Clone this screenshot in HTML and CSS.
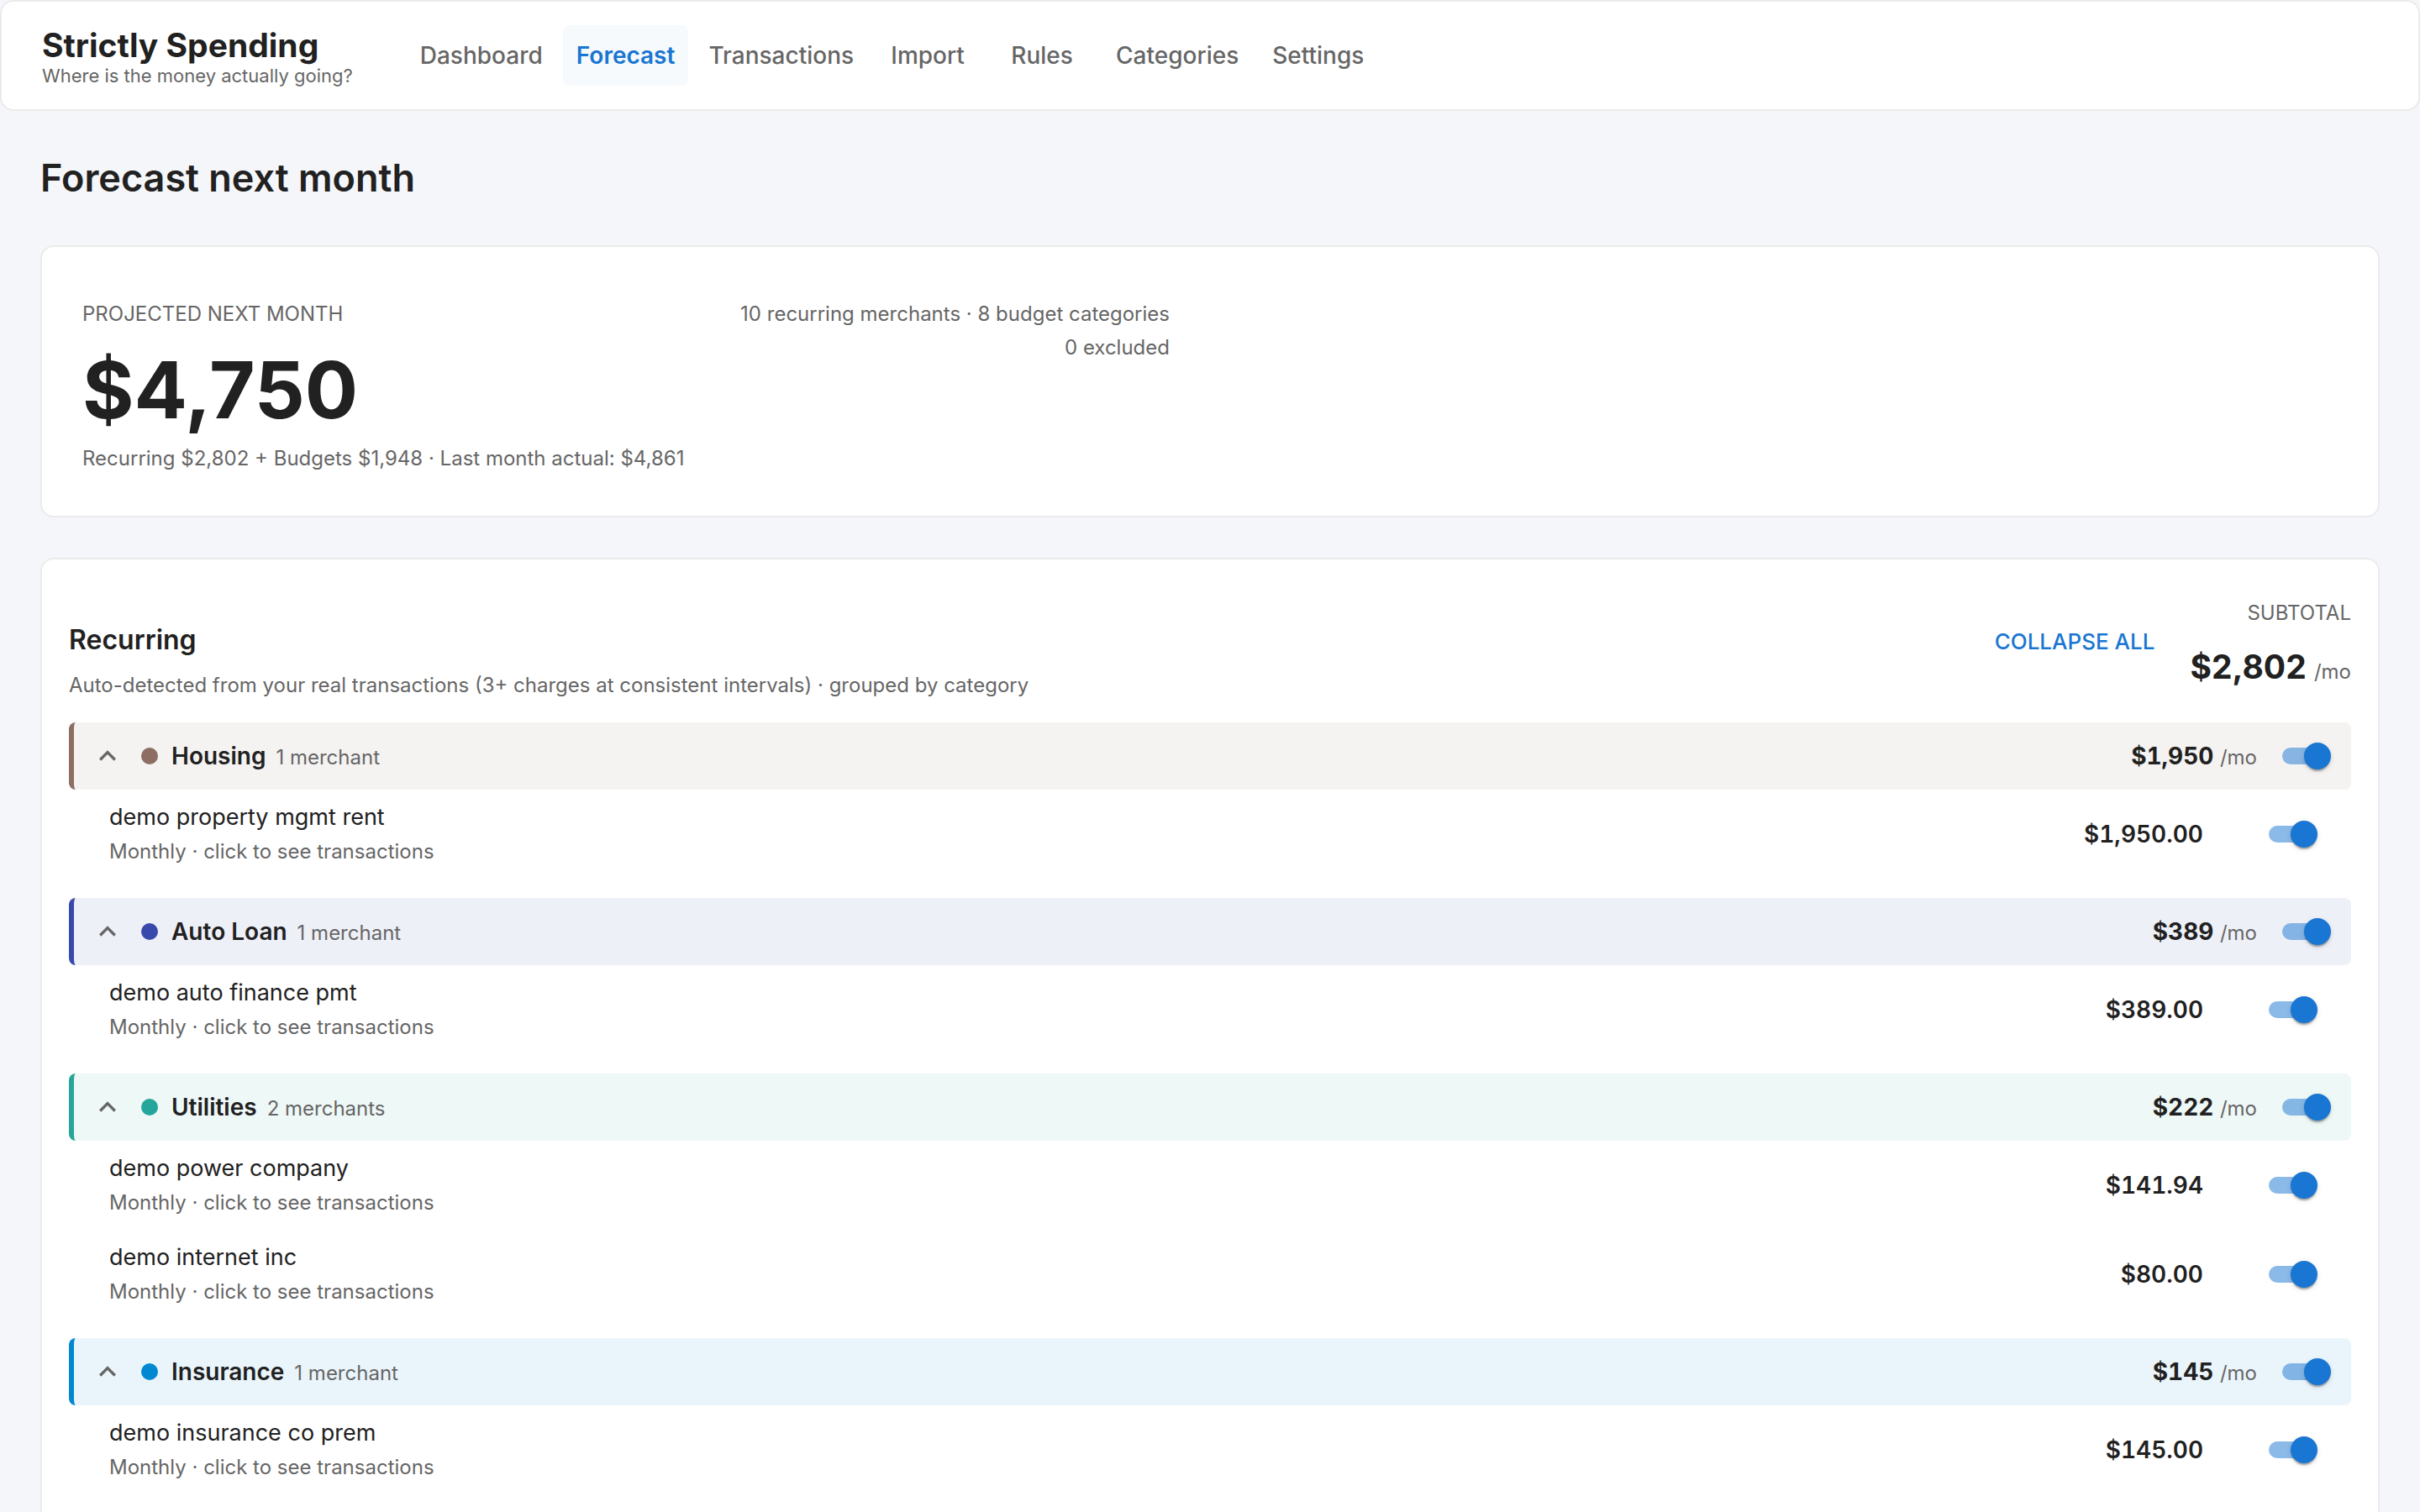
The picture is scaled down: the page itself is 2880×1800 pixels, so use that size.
FILE: index.html
```html
<!DOCTYPE html>
<html lang="en">

<head>
    <meta charset="UTF-8">
    <meta name="viewport" content="width=device-width, initial-scale=1.0">
    <title>Strictly Spending - Forecast</title>
    <link rel="stylesheet" href="styles.css">
</head>

<body>
    <header class="topbar">
        <div class="brand">
            <div class="brand-name">Strictly Spending</div>
            <div class="brand-tagline">Where is the money actually going?</div>
        </div>
        <nav class="nav">
            <a class="nav-link" href="#dashboard">Dashboard</a>
            <a class="nav-link active" href="#forecast">Forecast</a>
            <a class="nav-link" href="#transactions">Transactions</a>
            <a class="nav-link" href="#import">Import</a>
            <a class="nav-link" href="#rules">Rules</a>
            <a class="nav-link" href="#categories">Categories</a>
            <a class="nav-link" href="#settings">Settings</a>
        </nav>
    </header>

    <main class="page">
        <h1>Forecast next month</h1>

        <section class="card summary">
            <div class="summary-main">
                <div>
                    <div class="summary-label">PROJECTED NEXT MONTH</div>
                    <div class="summary-total">$4,750</div>
                    <div class="small">Recurring $2,802 + Budgets $1,948 · Last month actual: $4,861</div>
                </div>
                <div class="summary-counts small">
                    <div>10 recurring merchants · 8 budget categories</div>
                    <div>0 excluded</div>
                </div>
            </div>
        </section>

        <section class="card recurring">
            <div class="card-head">
                <div class="card-title">
                    <h2>Recurring</h2>
                    <p class="small">Auto-detected from your real transactions (3+ charges at consistent intervals) · grouped by category</p>
                </div>
                <button type="button" class="collapse-btn">COLLAPSE ALL</button>
                <div class="subtotal">
                    <div class="small">SUBTOTAL</div>
                    <div class="subtotal-value">$2,802 <span class="small">/mo</span></div>
                </div>
            </div>

            <div class="group housing">
                <div class="group-head">
                    <button type="button" class="toggle-group" aria-label="Collapse Housing">
                        <svg viewBox="0 0 24 24" aria-hidden="true"><path d="m12 8-6 6 1.41 1.41L12 10.83l4.59 4.58L18 14z"/></svg>
                    </button>
                    <span class="dot"></span>
                    <div class="group-title"><h3>Housing</h3> <span class="small">1 merchant</span></div>
                    <div class="group-total">$1,950 <span class="small">/mo</span></div>
                    <input type="checkbox" class="switch" aria-label="Include Housing" checked>
                </div>
                <ul class="merchants">
                    <li class="merchant">
                        <div class="merchant-info">
                            <div class="merchant-name">demo property mgmt rent</div>
                            <div class="small">Monthly · click to see transactions</div>
                        </div>
                        <div class="amount">$1,950.00</div>
                        <input type="checkbox" class="switch" aria-label="Include demo property mgmt rent" checked>
                    </li>
                </ul>
            </div>

            <div class="group auto-loan">
                <div class="group-head">
                    <button type="button" class="toggle-group" aria-label="Collapse Auto Loan">
                        <svg viewBox="0 0 24 24" aria-hidden="true"><path d="m12 8-6 6 1.41 1.41L12 10.83l4.59 4.58L18 14z"/></svg>
                    </button>
                    <span class="dot"></span>
                    <div class="group-title"><h3>Auto Loan</h3> <span class="small">1 merchant</span></div>
                    <div class="group-total">$389 <span class="small">/mo</span></div>
                    <input type="checkbox" class="switch" aria-label="Include Auto Loan" checked>
                </div>
                <ul class="merchants">
                    <li class="merchant">
                        <div class="merchant-info">
                            <div class="merchant-name">demo auto finance pmt</div>
                            <div class="small">Monthly · click to see transactions</div>
                        </div>
                        <div class="amount">$389.00</div>
                        <input type="checkbox" class="switch" aria-label="Include demo auto finance pmt" checked>
                    </li>
                </ul>
            </div>

            <div class="group utilities">
                <div class="group-head">
                    <button type="button" class="toggle-group" aria-label="Collapse Utilities">
                        <svg viewBox="0 0 24 24" aria-hidden="true"><path d="m12 8-6 6 1.41 1.41L12 10.83l4.59 4.58L18 14z"/></svg>
                    </button>
                    <span class="dot"></span>
                    <div class="group-title"><h3>Utilities</h3> <span class="small">2 merchants</span></div>
                    <div class="group-total">$222 <span class="small">/mo</span></div>
                    <input type="checkbox" class="switch" aria-label="Include Utilities" checked>
                </div>
                <ul class="merchants">
                    <li class="merchant">
                        <div class="merchant-info">
                            <div class="merchant-name">demo power company</div>
                            <div class="small">Monthly · click to see transactions</div>
                        </div>
                        <div class="amount">$141.94</div>
                        <input type="checkbox" class="switch" aria-label="Include demo power company" checked>
                    </li>
                    <li class="merchant">
                        <div class="merchant-info">
                            <div class="merchant-name">demo internet inc</div>
                            <div class="small">Monthly · click to see transactions</div>
                        </div>
                        <div class="amount">$80.00</div>
                        <input type="checkbox" class="switch" aria-label="Include demo internet inc" checked>
                    </li>
                </ul>
            </div>

            <div class="group insurance">
                <div class="group-head">
                    <button type="button" class="toggle-group" aria-label="Collapse Insurance">
                        <svg viewBox="0 0 24 24" aria-hidden="true"><path d="m12 8-6 6 1.41 1.41L12 10.83l4.59 4.58L18 14z"/></svg>
                    </button>
                    <span class="dot"></span>
                    <div class="group-title"><h3>Insurance</h3> <span class="small">1 merchant</span></div>
                    <div class="group-total">$145 <span class="small">/mo</span></div>
                    <input type="checkbox" class="switch" aria-label="Include Insurance" checked>
                </div>
                <ul class="merchants">
                    <li class="merchant">
                        <div class="merchant-info">
                            <div class="merchant-name">demo insurance co prem</div>
                            <div class="small">Monthly · click to see transactions</div>
                        </div>
                        <div class="amount">$145.00</div>
                        <input type="checkbox" class="switch" aria-label="Include demo insurance co prem" checked>
                    </li>
                </ul>
            </div>
        </section>
    </main>
</body>

</html>
```
FILE: styles.css
```css
* {
    box-sizing: border-box;
}

body {
    margin: 0;
    font-family: Inter, Roboto, sans-serif;
    font-size: 28px;
    line-height: 42px;
    color: #212121;
    background-color: #f5f6fa;
}

h1,
h2,
h3,
p,
ul {
    margin: 0;
    padding: 0;
}

button {
    font-family: inherit;
    border: none;
    background: none;
    cursor: pointer;
}

.small {
    font-size: 24px;
    font-weight: 400;
    line-height: 40px;
    color: #666;
}

/* top bar */
.topbar {
    display: flex;
    align-items: center;
    gap: 64px;
    padding: 28px 48px;
    background-color: #fff;
    border: 2px solid #ebebeb;
    border-radius: 16px;
}

.brand-name {
    font-size: 39px;
    font-weight: 700;
    line-height: 48px;
}

.brand-tagline {
    font-size: 22px;
    line-height: 24px;
    color: #666;
}

.nav {
    display: flex;
    gap: 8px;
}

.nav-link {
    min-width: 128px;
    padding: 12px 16px;
    font-weight: 500;
    line-height: 48px;
    text-align: center;
    text-decoration: none;
    color: #666;
    border-radius: 8px;
}

.nav-link.active {
    font-weight: 600;
    color: #1976d2;
    background-color: #f6fafd;
}

.page {
    display: flex;
    flex-direction: column;
    gap: 48px;
    padding: 48px;
}

h1 {
    font-size: 45px;
    font-weight: 600;
    line-height: 64px;
}

.card {
    background-color: #fff;
    border: 2px solid #ebebeb;
    border-radius: 16px;
}

/* projected total */
.summary {
    display: grid;
    grid-template-columns: 1fr 1fr;
    gap: 96px;
    padding: 48px;
}

.summary-main {
    display: flex;
    justify-content: space-between;
}

.summary-label {
    font-size: 24px;
    line-height: 64px;
    color: #666;
}

.summary-total {
    margin-bottom: 4px;
    font-size: 94px;
    font-weight: 700;
    line-height: 116px;
}

.summary-counts {
    padding-top: 12px;
    text-align: right;
}

/* recurring list */
.recurring {
    padding: 44px 32px;
}

.card-head {
    display: flex;
    align-items: baseline;
    gap: 32px;
    padding-bottom: 24px;
}

.card-title {
    flex: 1;
    padding-top: 26px;
}

h2 {
    margin-bottom: 8px;
    font-size: 32px;
    font-weight: 600;
    line-height: 52px;
}

.collapse-btn {
    padding: 8px 10px;
    font-size: 26px;
    font-weight: 500;
    line-height: 44px;
    color: #1976d2;
}

.subtotal {
    align-self: flex-start;
    text-align: right;
}

.subtotal-value {
    padding-top: 12px;
    font-size: 39px;
    font-weight: 700;
    line-height: 64px;
}

.group {
    margin-bottom: 23px;
}

.group-head {
    display: flex;
    align-items: center;
    gap: 16px;
    padding: 16px;
    border-left: 6px solid;
    border-radius: 8px;
}

.toggle-group {
    display: flex;
    width: 48px;
    height: 48px;
    padding: 4px;
}

.toggle-group svg {
    width: 40px;
    height: 40px;
    fill: #666;
}

.dot {
    width: 20px;
    height: 20px;
    border-radius: 50%;
}

.group-title {
    display: flex;
    flex: 1;
    align-items: baseline;
    gap: 12px;
}

h3 {
    font-size: 28px;
    font-weight: 600;
    line-height: 42px;
}

.group-total {
    font-weight: 700;
    font-variant-numeric: tabular-nums;
}

.housing .group-head {
    border-color: #8d6e63;
    background-color: #f5f3f2;
}

.housing .dot {
    background-color: #8d6e63;
}

.auto-loan .group-head {
    border-color: #3949ab;
    background-color: #eef0f8;
}

.auto-loan .dot {
    background-color: #3949ab;
}

.utilities .group-head {
    border-color: #26a69a;
    background-color: #eef8f7;
}

.utilities .dot {
    background-color: #26a69a;
}

.insurance .group-head {
    border-color: #0288d1;
    background-color: #eaf5fb;
}

.insurance .dot {
    background-color: #0288d1;
}

.merchants {
    list-style: none;
}

.merchant {
    display: flex;
    align-items: center;
    gap: 64px;
    padding: 12px 32px 12px 48px;
    cursor: pointer;
}

.merchant-info {
    flex: 1;
}

.merchant-name {
    font-size: 27px;
}

.amount {
    font-weight: 600;
    font-variant-numeric: tabular-nums;
}

/* on/off switch: the input is the track, ::after is the thumb */
.switch {
    position: relative;
    width: 52px;
    height: 20px;
    margin: 14px;
    appearance: none;
    background-color: rgba(0, 0, 0, 0.38);
    border-radius: 10px;
    cursor: pointer;
}

.switch::after {
    content: "";
    position: absolute;
    top: -6px;
    left: -6px;
    width: 32px;
    height: 32px;
    border-radius: 50%;
    background-color: #fff;
    box-shadow: 0 4px 2px -2px rgba(0, 0, 0, 0.2), 0 2px 2px rgba(0, 0, 0, 0.14), 0 2px 6px rgba(0, 0, 0, 0.12);
}

.switch:checked {
    background-color: rgba(25, 118, 210, 0.5);
}

.switch:checked::after {
    left: 26px;
    background-color: #1976d2;
}
```
